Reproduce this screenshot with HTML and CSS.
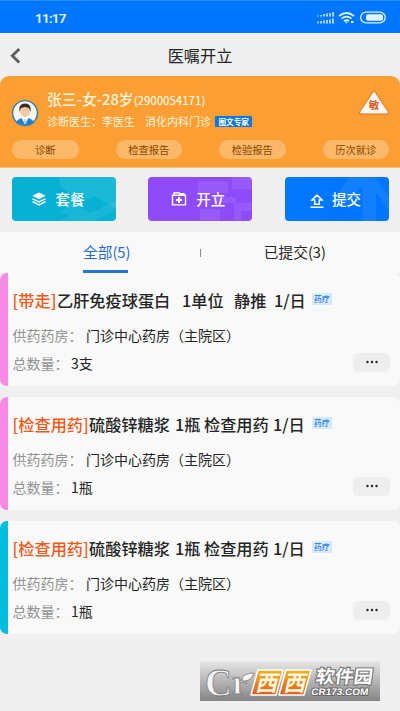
FILE: index.html
```html
<!DOCTYPE html>
<html lang="zh-CN">
<head>
<meta charset="utf-8">
<title>医嘱开立</title>
<link rel="stylesheet" href="styles.css">
</head>
<body>
<header class="status">
  <span class="time">11:17</span>
  <svg class="status-icons" width="72" height="16" viewBox="0 0 72 16" fill="none" stroke="#d9f3ff">
    <path d="M1 7.500v-1M4 7.500V6M7 7.500V5M10 7.500V4.500M13 7.500V4M16 7.500V3M1 14.500v-2M4 14.500v-2.500M7 14.500v-3M10 14.500v-3.500M13 14.500v-4M16 14.500v-5" stroke-width="1.500"/>
    <path d="M22 7q7.500-6 15 0M24.500 9.700q5-4 10 0M27 12.200q2.500-2 5 0" stroke-width="1.700"/>
    <path d="M28 12.500h3l-1.500 2zM34 12h2.500v2H34z" fill="#d9f3ff" stroke="none"/>
    <rect x="43.700" y="3.200" width="24.500" height="10.600" rx="5.300" stroke-width="1.300"/>
    <rect x="49" y="5.300" width="17" height="6.500" rx="2" fill="#e4f4f8" stroke="none"/>
  </svg>
</header>
<nav class="nav">
  <svg class="back" width="12" height="18" viewBox="0 0 12 18"><path d="M10.200 2L3.300 8.800l6.900 6.700" fill="none" stroke="#5d5d5d" stroke-width="2.800"/></svg>
  <h1>医嘱开立</h1>
</nav>
<section class="patient">
  <div class="patient-top">
    <svg class="avatar" width="28" height="28" viewBox="0 0 28 28">
      <circle cx="14" cy="14" r="12.400" fill="#f7f8f2" stroke="#3678ad" stroke-width="1.400"/>
      <path d="M5 24q1-4 6-5l3 3 3-3q5 1 6 5-9 5-18 0z" fill="#2581cb"/>
      <path d="M11 16h6v4l-3 5-3-5z" fill="#fff"/>
      <ellipse cx="14" cy="12" rx="5" ry="6" fill="#f6c8a0"/>
      <path d="M8.500 13Q7 4.500 14 4.500t5.500 8.500l-1.500-4-4-1-4 1z" fill="#3a2c27"/>
      <path d="M13.300 20h1.400l.6 5h-2.600z" fill="#b8cfdd"/>
    </svg>
    <div class="patient-info">
      <div class="name">张三-女-28岁<span class="pid">(2900054171)</span></div>
      <div class="doctor"><span class="doc-name">诊断医生：李医生</span><span>消化内科门诊</span><span class="expert">图文专家</span></div>
    </div>
    <div class="allergy">
      <svg width="32" height="26" viewBox="0 0 32 26"><path d="M16 2.500L29.500 23h-27z" fill="#fffaf5" stroke="#e36a1d" stroke-width="3" stroke-linejoin="round"/><path d="M16 3L29 22.500H3z" fill="#fffaf5" stroke="#fffaf5" stroke-width="2" stroke-linejoin="round"/></svg>
      <span>敏</span>
    </div>
  </div>
  <div class="pills"><span>诊断</span><span>检查报告</span><span>检验报告</span><span>历次就诊</span></div>
</section>
<section class="actions">
  <div class="action cyan">
    <svg class="art" width="104" height="44" viewBox="0 0 104 44" fill="#fff"><path opacity=".09" d="M47 0h57v32L83 19l-13 6-22-16z"/><path opacity=".08" d="M60 24l18 12 26-12v9L82 44H48l8-5-7-4z"/></svg>
    <svg class="ico" width="16" height="16" viewBox="0 0 16 16"><path d="M8 1.500l6.500 3.300L8 8.300 1.500 4.800z" fill="#fff"/><path d="M1.500 7.800L8 11l6.500-3.200M1.500 10.700L8 14l6.500-3.300" fill="none" stroke="#fff" stroke-width="1.500"/></svg>
    <span>套餐</span>
  </div>
  <div class="action purple">
    <svg class="art" width="104" height="44" viewBox="0 0 104 44" fill="#fff" opacity=".08"><path d="M50 4h30v12H50zM84 0h20v12H84zM66 20h22v6H66zM52 32h20v12H52zM86 26h18v8H93v10h-7z"/></svg>
    <svg class="ico" width="16" height="16" viewBox="0 0 16 16"><path d="M1.500 4.300h13v9.600h-13zM3 4V1.700h5l1 1h4V4" fill="none" stroke="#fff" stroke-width="1.400" stroke-linejoin="round"/><path d="M8 6v6M5 9h6" stroke="#fff" stroke-width="2"/></svg>
    <span>开立</span>
  </div>
  <div class="action blue">
    <svg class="art" width="104" height="44" viewBox="0 0 104 44" fill="#fff" opacity=".07"><path d="M64 0h18L66 25H47zM77 0h13l14 20v13L91 15v29H78z"/></svg>
    <svg class="ico" width="16" height="16" viewBox="0 0 16 16" fill="none" stroke="#fff" stroke-width="1.500"><path d="M8 2l5 5h-2.700v4.300H5.700V7H3zM1.500 14.300h13"/></svg>
    <span>提交</span>
  </div>
</section>
<section class="tabs">
  <div class="tab active">全部(5)</div><i></i><div class="tab">已提交(3)</div>
</section>
<main class="orders">
  <article class="order pink first">
    <h2><b>[带走]</b><span class="drug">乙肝免疫球蛋白</span><span class="dose">1单位</span><span class="usage">静推</span><span class="freq">1/日</span><em>药疗</em></h2>
    <p class="pharmacy"><label>供药药房：</label><span>门诊中心药房（主院区）</span></p>
    <div class="total"><label>总数量：</label><span>3支</span><button><svg width="12" height="4" viewBox="0 0 12 4"><circle cx="1.500" cy="2" r="1.200"/><circle cx="6" cy="2" r="1.200"/><circle cx="10.500" cy="2" r="1.200"/></svg></button></div>
  </article>
  <article class="order pink">
    <h2><b>[检查用药]</b><span class="drug">硫酸锌糖浆</span><span class="dose">1瓶</span><span class="usage">检查用药</span><span class="freq">1/日</span><em>药疗</em></h2>
    <p class="pharmacy"><label>供药药房：</label><span>门诊中心药房（主院区）</span></p>
    <div class="total"><label>总数量：</label><span>1瓶</span><button><svg width="12" height="4" viewBox="0 0 12 4"><circle cx="1.500" cy="2" r="1.200"/><circle cx="6" cy="2" r="1.200"/><circle cx="10.500" cy="2" r="1.200"/></svg></button></div>
  </article>
  <article class="order teal">
    <h2><b>[检查用药]</b><span class="drug">硫酸锌糖浆</span><span class="dose">1瓶</span><span class="usage">检查用药</span><span class="freq">1/日</span><em>药疗</em></h2>
    <p class="pharmacy"><label>供药药房：</label><span>门诊中心药房（主院区）</span></p>
    <div class="total"><label>总数量：</label><span>1瓶</span><button><svg width="12" height="4" viewBox="0 0 12 4"><circle cx="1.500" cy="2" r="1.200"/><circle cx="6" cy="2" r="1.200"/><circle cx="10.500" cy="2" r="1.200"/></svg></button></div>
  </article>
</main>
<footer class="mark">
  <svg width="180" height="40" viewBox="0 0 180 40">
    <defs><linearGradient id="or" x1="0" y1="0" x2="0" y2="1"><stop offset="0" stop-color="#efb21e"/><stop offset="1" stop-color="#e45b1c"/></linearGradient></defs>
    <g class="cr"><text x="5" y="35" textLength="27" lengthAdjust="spacingAndGlyphs">C</text><text x="32" y="33" class="r">r</text></g>
    <path d="M42 20q-1-8 12-8-3 9-12 8z" fill="#f4f4f4" stroke="#777" stroke-width=".8"/>
    <path d="M58 9h25l-7 25H51zM86 9h25l-7 25H79z" fill="url(#or)" stroke="#fff" stroke-width="1.500" stroke-linejoin="round"/>
    <g class="xi"><text transform="translate(55 30) skewX(-14)">西</text><text transform="translate(83 30) skewX(-14)">西</text></g>
    <text class="soft" transform="translate(115 22) skewX(-8)" textLength="57" lengthAdjust="spacingAndGlyphs">软件园</text>
    <text class="site" transform="translate(111 34) skewX(-6)" textLength="57" lengthAdjust="spacingAndGlyphs">CR173.COM</text>
  </svg>
</footer>
</body>
</html>
```

FILE: styles.css
```css
* { box-sizing: border-box; }
body {
  margin: 0; width: 400px; height: 711px; overflow: hidden; background: #efefef; color: #242424;
  font-family: "Noto Sans CJK SC", sans-serif; font-size: 14px; line-height: 20px;
  display: flex; flex-direction: column;
}
h1, h2, p { margin: 0; font-weight: 400; }
.status { height: 33px; background: #0076fe; border-top: 1px solid #2592fc; display: flex; justify-content: space-between; padding: 8px 11px 0 35px; }
.time { font-family: "Noto Sans", sans-serif; font-size: 13px; font-weight: 600; line-height: 18px; color: #e4f6ff; letter-spacing: -1.200px; }
.time { font-family: Roboto, sans-serif; letter-spacing: -.75px; font-size: 13.500px; }
.status-icons { margin-right: 0; }
.nav { height: 43px; display: grid; grid-template-columns: 1fr auto 1fr; align-items: center; padding: 0 9px; }
.nav h1 { font-size: 16.200px; line-height: 24px; }
.back { margin-top: 2px; }
.patient { height: 92px; background: #fb9f34; border-radius: 9px 9px 0 0; padding: 14px 11px 0; border-bottom: 1px solid #fbbf79; }
.patient-top { display: flex; height: 50px; }
.avatar { margin-top: 9px; flex: none; margin-right: 8px; }
.patient-info { color: #fff4df; flex: 1; }
.name { font-size: 14.800px; font-weight: 500; line-height: 20px; margin-top: -1px; white-space: nowrap; }
.pid { font-size: 11.200px; }
.doctor { display: flex; font-size: 11px; line-height: 16px; margin-top: 3px; align-items: center; white-space: nowrap; }
.doc-name { width: 98px; }
.expert { background: #0c78dd; color: #fff; font-size: 7.600px; line-height: 11px; font-weight: 700; border-radius: 1px; padding: 0 3.500px; margin-left: 4px; }
.allergy { position: relative; width: 32px; height: 26px; margin: 0 -1px 0 0; }
.allergy span { position: absolute; left: 0; right: 0; top: 7px; text-align: center; font-size: 10.500px; line-height: 15px; font-weight: 700; color: #e45319; }
.allergy svg { display: block; }
.pills { display: flex; justify-content: space-between; padding-left: 1px; }
.pills span { width: 66.500px; height: 19px; border-radius: 10px; background: #fcb869; color: #864600; font-size: 10.300px; line-height: 19px; text-align: center; }
.actions { height: 64px; display: flex; justify-content: space-between; padding: 9px 11px 0 11.500px; }
.action { position: relative; width: 104px; height: 44px; border-radius: 4px; display: flex; align-items: center; padding-left: 19px; color: #fff; overflow: hidden; }
.action span { font-size: 14.500px; font-weight: 500; position: relative; }
.art { position: absolute; left: 0; top: 0; }
.ico { position: relative; margin-right: 9px; }
.cyan { background: #06b1d4; }
.purple { background: #8f4bf8; padding-left: 23px; }
.blue { background: #0077fe; padding-left: 24px; }
.blue .ico { margin-right: 7px; margin-top: 3px; }
.tabs { flex: none; height: 41px; background: #f9f9f9; display: flex; align-items: center; justify-content: space-between; padding: 0 74px 0 83px; }
.tab { height: 41px; font-size: 14.700px; line-height: 40px; }
.tab.active { color: #1f6ecb; border-bottom: 3px solid #2376d5; width: 45px; white-space: nowrap; }
.tabs i { width: 1px; height: 8px; background: #898989; margin-left: 26px; margin-right: 16px; }
.orders { display: flex; flex-direction: column; gap: 11px; flex: none; }
.order { height: 113px; border-left: 8px solid; border-radius: 7px; background: #f9f9f9; padding: 15px 10px 0 4.500px; }
.pink { border-color: #f889e5; }
.teal { border-color: #05bddd; }
.order h2 { display: flex; font-size: 16.200px; line-height: 24px; height: 24px; white-space: nowrap; color: #252525; }
.order h2 b { width: 76.500px; font-weight: 500; color: #ed5918; }
.order h2 span { font-weight: 500; }
.drug { width: 86px; }
.dose { width: 29px; }
.usage { width: 69px; }
.freq { width: 39px; }
.first h2 b { width: 44.500px; }
.first .drug { width: 125px; }
.first .dose { width: 52px; }
.first .usage { width: 40px; }
.first .freq { width: 38px; }
.order em { height: 12px; margin-top: 5px; padding: 0 2px; background: #d6eafe; color: #297be0; font-size: 7.800px; line-height: 12px; font-weight: 500; font-style: normal; }
.order label { color: #929292; }
.pharmacy { display: flex; margin-top: 13px; line-height: 20px; white-space: nowrap; }
.pharmacy label { width: 73.500px; }
.total { display: flex; margin-top: 8px; line-height: 20px; }
.total label { width: 58.500px; }
.total button { width: 37px; height: 19px; margin: 0 0 0 auto; border: 0; border-radius: 5px; padding: 0 0 1px; background: #eee; display: flex; justify-content: center; align-items: center; }
.total button svg { fill: #222; }
.mark { flex: none; width: 180px; height: 40px; margin: 27px 0 0 200px; background: linear-gradient(#e6e6e6, #858585); }
.mark svg { display: block; overflow: visible; }
.cr text { font: 700 40px "Liberation Serif", serif; fill: #f5f5f5; stroke: #777; stroke-width: .8px; }
.cr .r { font-size: 34px; }
.xi text { font-size: 22px; font-weight: 700; fill: #fff7df; }
.soft { font-size: 18px; font-weight: 700; fill: #fff; stroke: #777; stroke-width: 2.200px; paint-order: stroke; }
.site { font: 700 9.500px "Liberation Sans", sans-serif; fill: #fff; stroke: #666; stroke-width: 1.800px; paint-order: stroke; }
```
